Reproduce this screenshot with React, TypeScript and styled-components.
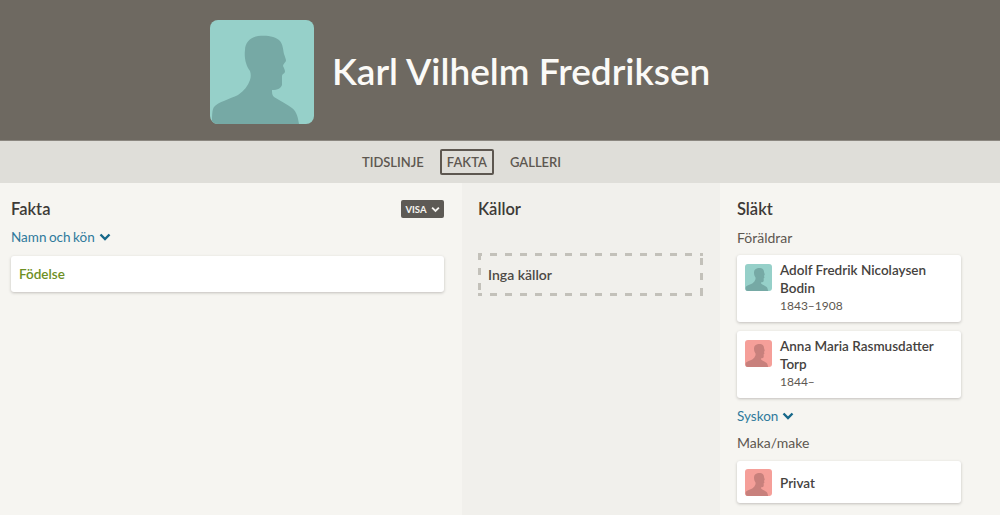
import styled, { createGlobalStyle } from 'styled-components';

const GlobalStyle = createGlobalStyle`
  html, body {
    margin: 0;
    padding: 0;
    background: #f6f5f1;
    font-family: Lato, "Liberation Sans", sans-serif;
    color: #3d3a37;
  }
  * { box-sizing: border-box; }
`;

const Page = styled.div`
  width: 1000px;
  height: 515px;
  overflow: hidden;
`;

const Header = styled.header`
  height: 141px;
  background: #6e6961;
  padding: 20px 0 0 210px;
  display: flex;
  gap: 18px;
  border-bottom: 1px solid #8b8780;
`;

const Avatar = styled.div<{ $size: number; $tone: 'male' | 'female' }>`
  width: ${(p) => p.$size}px;
  height: ${(p) => p.$size}px;
  flex: none;
  border-radius: ${(p) => (p.$size > 50 ? 8 : 3)}px;
  overflow: hidden;
  background: ${(p) => (p.$tone === 'male' ? '#96d0c9' : '#f59f99')};
  color: ${(p) => (p.$tone === 'male' ? '#76a9a5' : '#c8807c')};

  svg {
    display: block;
    width: 100%;
    height: 100%;
  }
`;

const Name = styled.h1`
  margin: 27px 0 0;
  font-size: 37px;
  line-height: 48px;
  font-weight: 600;
  color: #fbfaf7;
`;

const Nav = styled.nav`
  height: 42px;
  background: #dfded9;
  display: flex;
  align-items: center;
  justify-content: center;
  gap: 16px;
  padding-right: 77px;
`;

const NavItem = styled.a<{ $active?: boolean }>`
  height: 26px;
  padding: 0 ${(p) => (p.$active ? 5 : 0)}px;
  display: flex;
  align-items: center;
  font-size: 13px;
  font-weight: 600;
  color: #5d5750;
  border: ${(p) => (p.$active ? '2px solid #5d5750' : 'none')};
  border-radius: 2px;
`;

const Columns = styled.main`
  display: grid;
  grid-template-columns: 462px 258px 280px;
  height: 332px;
`;

const Column = styled.section<{ $shade?: boolean; $pad: string }>`
  padding: ${(p) => p.$pad};
  background: ${(p) => (p.$shade ? '#f1f0ec' : '#f6f5f1')};
`;

const TitleRow = styled.div`
  display: flex;
  align-items: flex-start;
  justify-content: space-between;
`;

const Title = styled.h2`
  margin: 0;
  font-size: 16.5px;
  line-height: 22px;
  font-weight: 600;
  color: #3d3a37;
`;

const ShowButton = styled.button`
  width: 43px;
  height: 18px;
  margin-top: 2px;
  padding: 0;
  border: none;
  border-radius: 2px;
  background: #5d5a55;
  color: #f6f5f1;
  font: 700 9.5px Lato, sans-serif;
  display: flex;
  align-items: center;
  justify-content: center;
  gap: 4px;
`;

const Toggle = styled.div<{ $top: number }>`
  margin-top: ${(p) => p.$top}px;
  display: flex;
  align-items: center;
  gap: 4px;
  font-size: 13.5px;
  word-spacing: -1px;
  line-height: 20px;
  color: #2f7a9c;

  svg {
    color: #16688a;
  }
`;

const Label = styled.div<{ $top: number }>`
  margin-top: ${(p) => p.$top}px;
  font-size: 14px;
  line-height: 20px;
  color: #5d5750;
`;

const FactCard = styled.div`
  margin-top: 9px;
  height: 36px;
  padding: 0 8px;
  display: flex;
  align-items: center;
  background: #fff;
  border-radius: 3px;
  box-shadow: 0 1px 3px rgba(60, 55, 50, 0.28);
  font-size: 13.5px;
  font-weight: 600;
  color: #6d8f24;
`;

const dashes = '#c3c1ba';

const EmptySources = styled.div`
  margin-top: 33px;
  height: 43px;
  padding: 0 10px;
  display: flex;
  align-items: center;
  font-size: 14px;
  font-weight: 600;
  color: #4c4945;
  background:
    linear-gradient(90deg, ${dashes} 0 4px, transparent 4px 12px, ${dashes} 12px 15px) 0 0 / 15px 3px repeat-x,
    linear-gradient(90deg, ${dashes} 0 4px, transparent 4px 12px, ${dashes} 12px 15px) 0 100% / 15px 3px repeat-x,
    linear-gradient(180deg, ${dashes} 0 7px, transparent 7px 15px) 0 0 / 3px 15px repeat-y,
    linear-gradient(180deg, ${dashes} 0 7px, transparent 7px 15px) 100% 5px / 3px 15px repeat-y;
`;

const PersonCard = styled.div<{ $top: number; $single?: boolean }>`
  margin-top: ${(p) => p.$top}px;
  padding: ${(p) => (p.$single ? 8 : 9)}px 8px 7px;
  display: flex;
  gap: 8px;
  background: #fff;
  border-radius: 3px;
  box-shadow: 0 1px 3px rgba(60, 55, 50, 0.28);
`;

const PersonText = styled.div<{ $single?: boolean }>`
  margin-top: ${(p) => (p.$single ? 0 : -3)}px;
  display: flex;
  flex-direction: column;
  justify-content: center;
`;

const PersonName = styled.div`
  font-size: 13.5px;
  line-height: 18px;
  font-weight: 600;
  color: #45423e;
`;

const Years = styled.div`
  font-size: 12px;
  line-height: 18px;
  color: #5d5750;
`;

const Silhouette = () => (
  <svg viewBox="0 0 104 104" aria-hidden="true">
    <path
      fill="currentColor"
      d="M2 104C2 96 2 90 4 87C8 82 20 79 28 75C34 71 38 66 40 60C41 57 41 54 40 51C36 46 34 38 35 30C35 22 41 17 48 16C56 15 66 16 70 21C73 25 73 29 74 34C75 37 76 39 76 41C75 43 73 44 73 46C74 48 75 50 75 52C74 54 72 54 72 56C72 59 72 62 72 65C71 68 68 70 62 70C62 73 62 75 64 77C70 81 77 84 82 88C87 92 88 98 89 104Z"
    />
  </svg>
);

const Chevron = ({ size = 12 }: { size?: number }) => (
  <svg width={size} height={size} viewBox="0 0 12 12" aria-hidden="true">
    <path d="M1.5 3.5L6 8L10.5 3.5" fill="none" stroke="currentColor" strokeWidth="2.4" />
  </svg>
);

const tabs = ['TIDSLINJE', 'FAKTA', 'GALLERI'];

export default function App() {
  return (
    <Page>
      <GlobalStyle />
      <Header>
        <Avatar $size={104} $tone="male">
          <Silhouette />
        </Avatar>
        <Name>Karl Vilhelm Fredriksen</Name>
      </Header>
      <Nav>
        {tabs.map((tab) => (
          <NavItem key={tab} $active={tab === 'FAKTA'}>
            {tab}
          </NavItem>
        ))}
      </Nav>
      <Columns>
        <Column $pad="15px 18px 0 11px">
          <TitleRow>
            <Title>Fakta</Title>
            <ShowButton>
              VISA <Chevron size={9} />
            </ShowButton>
          </TitleRow>
          <Toggle $top={7}>
            Namn och kön <Chevron />
          </Toggle>
          <FactCard>Födelse</FactCard>
        </Column>
        <Column $shade $pad="15px 17px 0 16px">
          <Title>Källor</Title>
          <EmptySources>Inga källor</EmptySources>
        </Column>
        <Column $pad="15px 39px 0 17px">
          <Title>Släkt</Title>
          <Label $top={8}>Föräldrar</Label>
          <PersonCard $top={7}>
            <Avatar $size={27} $tone="male">
              <Silhouette />
            </Avatar>
            <PersonText>
              <PersonName>Adolf Fredrik Nicolaysen Bodin</PersonName>
              <Years>1843–1908</Years>
            </PersonText>
          </PersonCard>
          <PersonCard $top={9}>
            <Avatar $size={27} $tone="female">
              <Silhouette />
            </Avatar>
            <PersonText>
              <PersonName>Anna Maria Rasmusdatter Torp</PersonName>
              <Years>1844–</Years>
            </PersonText>
          </PersonCard>
          <Toggle $top={8}>
            Syskon <Chevron />
          </Toggle>
          <Label $top={7}>Maka/make</Label>
          <PersonCard $top={8} $single>
            <Avatar $size={27} $tone="female">
              <Silhouette />
            </Avatar>
            <PersonText $single>
              <PersonName>Privat</PersonName>
            </PersonText>
          </PersonCard>
        </Column>
      </Columns>
    </Page>
  );
}
